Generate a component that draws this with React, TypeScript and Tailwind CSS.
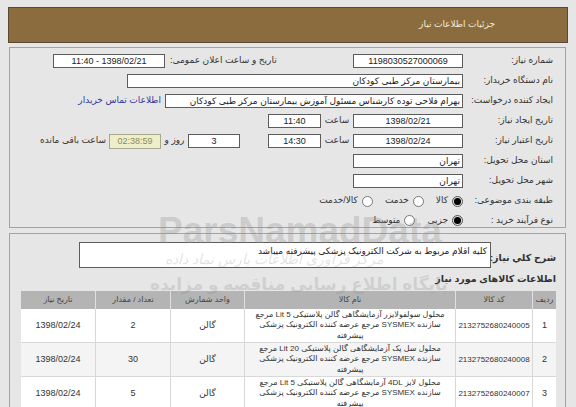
import React from 'react'

const rows = [
    {
        idx: '1',
        code: '2132752680240005',
        line1: 'محلول سولفولایزر آزمایشگاهی گالن پلاستیکی 5 Lit مرجع',
        unit: 'گالن',
        qty: '2',
        date: '1398/02/24',
        bg: 'bg-white',
    },
    {
        idx: '2',
        code: '2132752680240008',
        line1: 'محلول سل پک آزمایشگاهی گالن پلاستیکی 20 Lit مرجع',
        unit: 'گالن',
        qty: '30',
        date: '1398/02/24',
        bg: 'bg-[#f4f4f4]',
    },
    {
        idx: '3',
        code: '2132752680240007',
        line1: 'محلول لایز 4DL آزمایشگاهی گالن پلاستیکی 5 Lit مرجع',
        unit: 'گالن',
        qty: '5',
        date: '1398/02/24',
        bg: 'bg-white',
    },
]

function Box({ className, children }: { className: string; children?: React.ReactNode }) {
    return (
        <div className={`h-[14px] shrink-0 border border-[#5c5c5c] bg-white flex items-center text-[#222] leading-none whitespace-nowrap overflow-hidden ${className}`}>
            {children}
        </div>
    )
}

function Label({ children }: { children: React.ReactNode }) {
    return <div className="w-[90px] shrink-0 text-[#333] whitespace-nowrap">{children}</div>
}

function Radio({ on }: { on?: boolean }) {
    if (on) {
        return (
            <span className="w-[11px] h-[11px] rounded-full border border-[#555] bg-[#ddd] flex items-center justify-center">
                <span className="w-[7px] h-[7px] rounded-full bg-black" />
            </span>
        )
    }
    return <span className="w-[11px] h-[11px] rounded-full border border-[#777] bg-white" />
}

export default function App() {
    return (
        <div dir="rtl" className="relative w-[576px] h-[407px] overflow-hidden bg-[#e6e6e6] font-['Liberation_Sans','DejaVu_Sans',sans-serif] text-[9px]">
            {/* header */}
            <div className="mx-[8px] mt-[7px] h-[36px] bg-[#8b6c3f] border border-[#5b4a32] flex items-center pr-[72px] text-[#f3ead8] text-[9px]">
                جزئیات اطلاعات نیاز
            </div>

            {/* form panel */}
            <div className="ml-[9px] mr-[10px] mt-[4px] h-[181px] border border-[#a3a3a3] pt-[3px] pr-[12px]">
                <div className="flex items-center h-[20px]">
                    <Label>شماره نیاز:</Label>
                    <Box className="w-[110px] justify-center">1198030527000069</Box>
                    <div className="flex-1 flex justify-end items-center">
                        <span className="ml-[5px] text-[#333] whitespace-nowrap">تاریخ و ساعت اعلان عمومی:</span>
                        <Box className="w-[112px] justify-center">1398/02/21 - 11:40</Box>
                    </div>
                    <div className="w-[43px] shrink-0" />
                </div>
                <div className="flex items-center h-[20px]">
                    <Label>نام دستگاه خریدار:</Label>
                    <Box className="w-[336px] pr-[2px]">بیمارستان مرکز طبی کودکان</Box>
                </div>
                <div className="flex items-center h-[20px]">
                    <Label>ایجاد کننده درخواست:</Label>
                    <Box className="w-[298px] pr-[2px]">بهرام فلاحی توده کارشناس مسئول آموزش بیمارستان مرکز طبی کودکان</Box>
                    <span className="mr-[4px] text-[#35359c] whitespace-nowrap">اطلاعات تماس خریدار</span>
                </div>
                <div className="flex items-center h-[20px]">
                    <Label>تاریخ ایجاد نیاز:</Label>
                    <Box className="w-[110px] justify-center">1398/02/21</Box>
                    <span className="w-[32px] text-center text-[#333]">ساعت</span>
                    <Box className="w-[53px] justify-center">11:40</Box>
                </div>
                <div className="flex items-center h-[20px]">
                    <Label>تاریخ اعتبار نیاز:</Label>
                    <Box className="w-[110px] justify-center">1398/02/24</Box>
                    <span className="w-[32px] text-center text-[#333]">ساعت</span>
                    <Box className="w-[53px] justify-center">14:30</Box>
                    <div className="w-[28px]" />
                    <Box className="w-[52px] justify-center">3</Box>
                    <span className="w-[27px] text-center text-[#333] whitespace-nowrap">روز و</span>
                    <div className="w-[52px] h-[15px] border border-[#a8a88a] bg-[#eeeecb] flex items-center justify-center text-[#8c8c5a] leading-none">
                        02:38:59
                    </div>
                    <span className="mr-[3px] text-[#333] whitespace-nowrap">ساعت باقی مانده</span>
                </div>
                <div className="flex items-center h-[20px]">
                    <Label>استان محل تحویل:</Label>
                    <Box className="w-[110px] pr-[2px]">تهران</Box>
                </div>
                <div className="flex items-center h-[20px]">
                    <Label>شهر محل تحویل:</Label>
                    <Box className="w-[110px] pr-[2px]">تهران</Box>
                </div>
                <div className="flex items-center h-[20px]">
                    <Label>طبقه بندی موضوعی:</Label>
                    <div className="flex items-center gap-[4px] text-[#333] whitespace-nowrap">
                        <Radio on />
                        <span className="ml-[8px]">کالا</span>
                        <Radio />
                        <span className="ml-[8px]">خدمت</span>
                        <Radio />
                        <span>کالا/خدمت</span>
                    </div>
                </div>
                <div className="flex items-center h-[19px]">
                    <Label>نوع فرآیند خرید :</Label>
                    <div className="flex items-center gap-[4px] text-[#333] whitespace-nowrap">
                        <Radio on />
                        <span className="ml-[8px]">جزیی</span>
                        <Radio />
                        <span>متوسط</span>
                    </div>
                </div>
            </div>

            {/* items panel */}
            <div className="ml-[9px] mr-[10px] mt-[5px] h-[200px] border border-[#a3a3a3] pt-[8px] pr-[9px] pl-[12px]">
                <div className="flex items-center">
                    <div className="w-[65px] shrink-0 pt-[6px] font-bold text-[9.5px] text-[#333] whitespace-nowrap">شرح کلي نياز:</div>
                    <div className="w-[412px] h-[26px] border border-[#5c5c5c] bg-white pr-[3px] pt-[2px] text-[#222] leading-[12px]">
                        کلیه اقلام مربوط به شرکت الکترونیک پزشکی پیشرفته میباشد
                    </div>
                </div>
                <div className="mt-[4px] h-[14px] font-bold text-[9.5px] text-[#333] leading-[14px]">اطلاعات کالاهای مورد نیاز</div>
                <div className="mt-[5px] w-[535px]">
                    <div className="flex h-[18px] bg-[#b4b4b4] text-[#444] text-[8px]">
                        <div className="w-[23px] flex items-center justify-center">ردیف</div>
                        <div className="w-[77px] flex items-center justify-center border-r border-[#e0e0e0]">کد کالا</div>
                        <div className="w-[211px] flex items-center justify-center border-r border-[#e0e0e0]">نام کالا</div>
                        <div className="w-[74px] flex items-center justify-center border-r border-[#e0e0e0]">واحد شمارش</div>
                        <div className="w-[75px] flex items-center justify-center border-r border-[#e0e0e0]">تعداد / مقدار</div>
                        <div className="flex-1 flex items-center justify-center border-r border-[#e0e0e0]">تاریخ نیاز</div>
                    </div>
                    {rows.map((r) => (
                        <div key={r.idx} className={`flex h-[34px] border-b border-[#d8d8d8] text-[#333] ${r.bg}`}>
                            <div className="w-[23px] flex items-center justify-center">{r.idx}</div>
                            <div className="w-[77px] flex items-center justify-center border-r border-[#d8d8d8] text-[8px]">{r.code}</div>
                            <div className="w-[211px] flex flex-col items-center justify-center border-r border-[#d8d8d8] text-center text-[8px] leading-[10.5px] whitespace-nowrap">
                                <span>{r.line1}</span>
                                <span>سازنده SYSMEX مرجع عرضه کننده الکترونیک پزشکی</span>
                                <span>پیشرفته</span>
                            </div>
                            <div className="w-[74px] flex items-center justify-center border-r border-[#d8d8d8]">{r.unit}</div>
                            <div className="w-[75px] flex items-center justify-center border-r border-[#d8d8d8]">{r.qty}</div>
                            <div className="flex-1 flex items-center justify-center border-r border-[#d8d8d8]">{r.date}</div>
                        </div>
                    ))}
                </div>
            </div>

            {/* watermark */}
            <div dir="ltr" className="pointer-events-none absolute left-[158px] top-[212px] text-[37px] font-bold font-['Liberation_Sans',sans-serif] text-[rgba(140,140,140,0.3)] leading-none">
                ParsNamadData
            </div>
            <div className="pointer-events-none absolute left-[165px] top-[252px] text-[14px] italic text-[rgba(140,140,140,0.25)] leading-none">
                مرکز فراوری اطلاعات پارس نماد داده
            </div>
            <div className="pointer-events-none absolute left-[150px] top-[276px] text-[17px] font-bold text-[rgba(140,140,140,0.25)] leading-none">
                پایگاه اطلاع رسانی مناقصه و مزایده
            </div>
        </div>
    )
}
